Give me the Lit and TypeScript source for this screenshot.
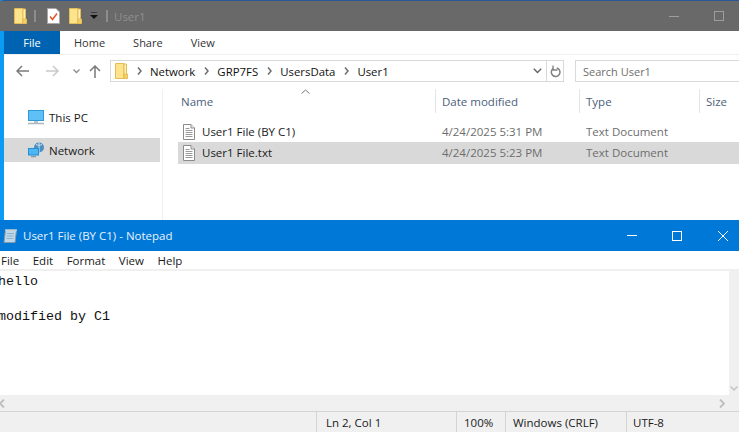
import {LitElement, html, css, svg} from 'lit'
import {customElement} from 'lit/decorators.js'

const folder = svg`<path d="M.5 .5h8.500v15H.5z" fill="#fde38c" stroke="#e3bd55"/><path d="M9 1h2.500v14.500H9z" fill="#fff1b8" stroke="#e3bd55"/><path d="M9 11h3.500v4.500H9z" fill="#f5cf68" stroke="#e3bd55"/>`

const docIcon = html`<svg class="doc" width="12" height="16" viewBox="0 0 12 16">
  <path d="M.5 .5h7.500l3.500 3.500v11.500H.5z" fill="#fff" stroke="#8b8b8b"/>
  <path d="M8 .5v3.500h3.500" fill="#eee" stroke="#8b8b8b"/>
  <path d="M2.500 4.500h4M2.500 6.500h7M2.500 8.500h7M2.500 10.500h7M2.500 12.500h7" stroke="#9a9a9a"/>
</svg>`

const sep = html`<svg class="chev" width="5" height="8" viewBox="0 0 5 8"><path d="M1 .5 4 4 1 7.500" fill="none" stroke="#6d6d6d" stroke-width="1.500"/></svg>`

@customElement('app-root')
export class AppRoot extends LitElement {
  static override styles = css`
    :host {
      display: flex;
      flex-direction: column;
      width: 739px;
      height: 432px;
      overflow: hidden;
      background: #fff;
      font-family: "Open Sans", "Noto Sans", sans-serif;
      font-size: 11.5px;
      color: #1a1a1a;
    }
    svg { display: block; flex: none; }

    /* explorer window */
    .explorer {
      height: 220px;
      flex: none;
      box-sizing: border-box;
      border-left: 4px solid #0a9cf2;
      border-top: 1px solid #2b5797;
      display: flex;
      flex-direction: column;
    }
    .ex-title {
      height: 30px;
      margin-left: -4px;
      background: #696969;
      display: flex;
      align-items: center;
      color: #8f8f8f;
      font-size: 11.5px;
      flex: none;
    }
    .ex-title .q { margin-left: 14px; }
    .ex-title .bar { width: 2px; height: 12px; border: 1px solid #8d8d8d; box-sizing: border-box; }
    .ex-title .name { margin-left: 6px; flex: 1; }
    .win-min { width: 10px; height: 1px; background: #9d9d9d; margin-right: 35px; }
    .win-max { width: 10px; height: 10px; border: 1px solid #9d9d9d; box-sizing: border-box; margin-right: 15px; }

    .tabs {
      height: 23px;
      flex: none;
      display: flex;
      align-items: center;
      border-bottom: 1px solid #f0f0f0;
      font-size: 11px;
      color: #333;
    }
    .tabs .file {
      width: 56px;
      height: 100%;
      background: #0063b1;
      color: #fff;
      display: flex;
      align-items: center;
      justify-content: center;
      margin-right: 14px;
    }
    .tabs span { margin-right: 28px; }

    .nav {
      height: 22px;
      margin-top: 5px;
      flex: none;
      display: flex;
      align-items: center;
    }
    .nav .arrows { width: 106px; display: flex; align-items: center; padding-left: 12px; box-sizing: border-box; }
    .addr {
      width: 437px;
      height: 22px;
      box-sizing: border-box;
      border: 1px solid #d9d9d9;
      display: flex;
      align-items: center;
      padding-left: 4px;
      font-size: 11.4px;
      color: #111;
    }
    .addr .chev { margin: 0 8px 0 9px; }
    .addr .grow { flex: 1; }
    .refresh {
      width: 17px;
      height: 22px;
      box-sizing: border-box;
      border: 1px solid #d9d9d9;
      border-left: none;
      display: flex;
      align-items: center;
      justify-content: center;
    }
    .search {
      margin-left: 11px;
      flex: 1;
      height: 22px;
      box-sizing: border-box;
      border: 1px solid #d9d9d9;
      border-right: none;
      padding-left: 7px;
      display: flex;
      align-items: center;
      color: #6d6d6d;
      font-size: 11px;
    }

    .main { flex: 1; display: flex; min-height: 0; padding-top: 7px; }
    .side {
      width: 158px;
      flex: none;
      border-right: 1px solid #f0f0f0;
      padding-top: 16px;
      margin-right: 15px;
      box-sizing: content-box;
    }
    .side-row {
      width: 156px;
      height: 24px;
      display: flex;
      align-items: center;
      padding-left: 24px;
      gap: 5px;
      box-sizing: border-box;
      margin-bottom: 9px;
      color: #1a1a1a;
    }
    .side-row.sel { background: #d9d9d9; }

    .list { flex: 1; min-width: 0; }
    .cols, .row {
      display: grid;
      grid-template-columns: 258px 144px 120px 1fr;
    }
    .cols {
      height: 24px;
      color: #4c607a;
      position: relative;
      font-size: 11.5px;
    }
    .cols div { display: flex; align-items: center; padding-left: 6px; border-right: 1px solid #e5e5e5; box-sizing: border-box; }
    .cols div:first-child { padding-left: 3px; }
    .cols div:last-of-type { border-right: none; }
    .sort { position: absolute; left: 123px; top: 0; }
    .rows { padding-top: 8px; }
    .row {
      height: 21px;
      align-items: center;
      color: #6d6d6d;
      font-size: 11.5px;
    }
    .row.sel { background: #d9d9d9; height: 22px; box-sizing: border-box; padding-bottom: 1px; }
    .row .nm { display: flex; align-items: center; gap: 7px; padding-left: 5px; color: #1a1a1a; }
    .row .dt { padding-left: 6px; }
    .row .ty { padding-left: 6px; }

    /* notepad window */
    .notepad { flex: 1; display: flex; flex-direction: column; min-height: 0; }
    .np-title {
      height: 31px;
      flex: none;
      background: #0078d7;
      color: #fff;
      display: flex;
      align-items: center;
      padding-left: 3px;
      font-size: 11.5px;
    }
    .np-title .name { flex: 1; margin-left: 5px; color: #e8f2fb; }
    .np-min { width: 10px; height: 1px; background: #fff; margin-right: 35px; }
    .np-max { width: 10px; height: 10px; box-sizing: border-box; border: 1px solid #fff; margin-right: 36px; }
    .np-close { margin-right: 11px; }
    .menu {
      height: 18px;
      flex: none;
      display: flex;
      align-items: center;
      padding-left: 1px;
      gap: 13.500px;
      font-size: 11.5px;
      color: #1a1a1a;
    }
    .edit-area {
      flex: 1;
      min-height: 0;
      display: flex;
      border-top: 2px solid #f0f0f0;
    }
    .text {
      flex: 1;
      margin: 0 0 0 -2px;
      padding-top: 2px;
      font-family: "Liberation Mono", monospace;
      font-size: 13.33px;
      line-height: 17.500px;
      color: #111;
    }
    .vbar {
      width: 10px;
      background: #f0f0f0;
      display: flex;
      align-items: flex-end;
      justify-content: center;
      padding-bottom: 4px;
      box-sizing: border-box;
    }
    .hbar {
      height: 16px;
      flex: none;
      background: #f0f0f0;
      display: flex;
      align-items: center;
      justify-content: space-between;
      padding-right: 14px;
      border-bottom: 1px solid #d4d4d4;
    }
    .status {
      height: 20px;
      flex: none;
      background: #f0f0f0;
      display: grid;
      grid-template-columns: 316px 140px 49px 121px 1fr;
      align-items: stretch;
      font-size: 11.5px;
      color: #1a1a1a;
    }
    .status div { display: flex; align-items: center; box-sizing: border-box; border-left: 1px solid #d4d4d4; padding-left: 9px; }
    .status div:first-child { border-left: none; }
    .status div:nth-child(3) { padding-left: 7px; }
    .status div:nth-child(4) { padding-left: 7px; }
    .status div:nth-child(5) { padding-left: 6px; }
  `

  private renderTitleBar() {
    return html`<div class="ex-title">
      <svg class="q" width="13" height="16" viewBox="0 0 13 16">${folder}</svg>
      <div class="bar" style="margin-left:7px"></div>
      <svg style="margin-left:11px" width="13" height="16" viewBox="0 0 13 16">
        <path d="M.5 .5h8.500l3.500 3.500v11.500H.5z" fill="#fff" stroke="#a8a8a8"/>
        <path d="M3 8.500l2.500 3 4.500-6" fill="none" stroke="#e2582a" stroke-width="1.500"/>
      </svg>
      <svg style="margin-left:9px" width="13" height="16" viewBox="0 0 13 16">${folder}</svg>
      <svg style="margin-left:8px" width="8" height="8" viewBox="0 0 8 8"><path d="M1 0h6" stroke="#111"/><path d="M0 3h8L4 7z" fill="#111"/></svg>
      <div class="bar" style="margin-left:8px"></div>
      <span class="name">User1</span>
      <div class="win-min"></div>
      <div class="win-max"></div>
    </div>`
  }

  private renderNav() {
    return html`<div class="nav">
      <div class="arrows">
        <svg width="13" height="12" viewBox="0 0 13 12"><path d="M6 1 1 6l5 5M1 6h12" fill="none" stroke="#7a7a7a" stroke-width="1.500"/></svg>
        <svg style="margin-left:17px" width="13" height="12" viewBox="0 0 13 12"><path d="M7 1l5 5-5 5M12 6H0" fill="none" stroke="#c9c9c9" stroke-width="1.500"/></svg>
        <svg style="margin-left:14px" width="7" height="5" viewBox="0 0 7 5"><path d="M.5 .5 3.500 3.500 6.500 .5" fill="none" stroke="#8a8a8a" stroke-width="1.300"/></svg>
        <svg style="margin-left:9px" width="12" height="13" viewBox="0 0 12 13"><path d="M1 6l5-5 5 5M6 1v12" fill="none" stroke="#7a7a7a" stroke-width="1.500"/></svg>
      </div>
      <div class="addr">
        <svg width="13" height="16" viewBox="0 0 13 16">${folder}</svg>
        ${sep}<span>Network</span>
        ${sep}<span>GRP7FS</span>
        ${sep}<span>UsersData</span>
        ${sep}<span class="grow">User1</span>
        <svg style="margin-right:4px" width="9" height="6" viewBox="0 0 9 6"><path d="M.8 .8 4.500 4.500 8.200 .8" fill="none" stroke="#666" stroke-width="1.500"/></svg>
      </div>
      <div class="refresh">
        <svg width="11" height="13" viewBox="0 0 11 13"><path d="M6.800 3A4.300 4.300 0 1 1 3.500 3.400" fill="none" stroke="#808080" stroke-width="1.500"/><path d="M3 .5v4.500h4.500" fill="none" stroke="#808080" stroke-width="1.300"/></svg>
      </div>
      <div class="search">Search User1</div>
    </div>`
  }

  private renderSide() {
    return html`<div class="side">
      <div class="side-row">
        <svg width="16" height="15" viewBox="0 0 16 15">
          <rect x=".5" y=".5" width="15" height="10" fill="#5ec0f5" stroke="#2f9ad6"/>
          <path d="M6 11h4v2H6z" fill="#b9c6d0"/><path d="M0 13.500h16" stroke="#aab6c0" stroke-width="1.500"/>
        </svg>
        <span>This PC</span>
      </div>
      <div class="side-row sel">
        <svg width="16" height="16" viewBox="0 0 16 16">
          <circle cx="11" cy="5.500" r="5" fill="#4e8fc0"/><path d="M8 2.500c2 1 4 1 6 0M11 .5v10" stroke="#cfe3f2" fill="none"/>
          <rect x=".5" y="6.500" width="10" height="6.500" fill="#4fb6f3" stroke="#1f8fd6"/>
          <path d="M3 14.500h5" stroke="#7f9bb0" stroke-width="1.500"/>
        </svg>
        <span>Network</span>
      </div>
    </div>`
  }

  private renderList() {
    return html`<div class="list">
      <div class="cols">
        <div>Name</div><div>Date modified</div><div>Type</div><div>Size</div>
        <svg class="sort" width="9" height="5" viewBox="0 0 9 5"><path d="M.5 4.500 4.500 1l4 3.500" fill="none" stroke="#7a7a7a"/></svg>
      </div>
      <div class="rows">
        <div class="row">
          <div class="nm">${docIcon}<span>User1 File (BY C1)</span></div>
          <div class="dt">4/24/2025 5:31 PM</div><div class="ty">Text Document</div>
        </div>
        <div class="row sel">
          <div class="nm">${docIcon}<span>User1 File.txt</span></div>
          <div class="dt">4/24/2025 5:23 PM</div><div class="ty">Text Document</div>
        </div>
      </div>
    </div>`
  }

  private renderNotepad() {
    return html`<div class="notepad">
      <div class="np-title">
        <svg width="15" height="15" viewBox="0 0 15 15">
          <path d="M2.500 2h11l-1.500 12.500H1z" fill="#bcd9ec" stroke="#8a9aa5"/>
          <path d="M3 1v2M5 1v2M7 1v2M9 1v2M11 1v2M13 1v2" stroke="#e8e8e8"/>
          <path d="M4 5.500h7M3.700 8h7M3.400 10.500h7" stroke="#8fb2c9"/>
        </svg>
        <span class="name">User1 File (BY C1) - Notepad</span>
        <div class="np-min"></div>
        <div class="np-max"></div>
        <svg class="np-close" width="10" height="10" viewBox="0 0 10 10"><path d="M0 0l10 10M10 0 0 10" stroke="#fff"/></svg>
      </div>
      <div class="menu"><span>File</span><span>Edit</span><span>Format</span><span>View</span><span>Help</span></div>
      <div class="edit-area">
        <pre class="text">hello

modified by C1</pre>
        <div class="vbar">
          <svg width="8" height="5" viewBox="0 0 8 5"><path d="M.5 .5 4 4l3.500-3.500" fill="none" stroke="#c4c4c4" stroke-width="1.500"/></svg>
        </div>
      </div>
      <div class="hbar">
        <svg style="margin-left:-1px" width="6" height="9" viewBox="0 0 6 9"><path d="M5 .5 1 4.500 5 8.500" fill="none" stroke="#bdbdbd" stroke-width="1.800"/></svg>
        <svg width="6" height="9" viewBox="0 0 6 9"><path d="M1 .5 5 4.500 1 8.500" fill="none" stroke="#bdbdbd" stroke-width="1.800"/></svg>
      </div>
      <div class="status">
        <div></div><div>Ln 2, Col 1</div><div>100%</div><div>Windows (CRLF)</div><div>UTF-8</div>
      </div>
    </div>`
  }

  override render() {
    return html`
      <div class="explorer">
        ${this.renderTitleBar()}
        <div class="tabs"><div class="file">File</div><span>Home</span><span>Share</span><span>View</span></div>
        ${this.renderNav()}
        <div class="main">${this.renderSide()}${this.renderList()}</div>
      </div>
      ${this.renderNotepad()}
    `
  }
}
